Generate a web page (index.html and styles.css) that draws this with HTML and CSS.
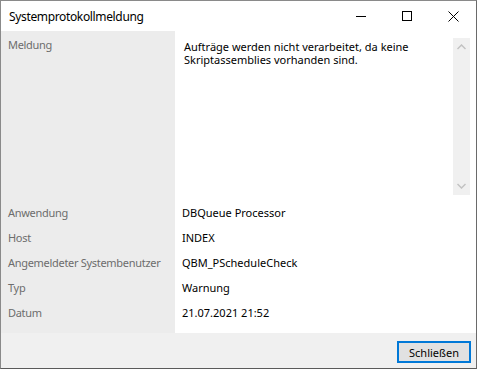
FILE: index.html
```html
<!DOCTYPE html>
<html lang="de">

<head>
  <meta charset="UTF-8" />
  <title>Systemprotokollmeldung</title>
  <link rel="stylesheet" href="styles.css">
</head>

<body>

  <div class="window">
    <!-- Title bar -->
    <div class="titlebar">
      <div class="title">Systemprotokollmeldung</div>
      <div class="caption-buttons">
        <span class="cap-btn">
          <svg width="10" height="10" viewBox="0 0 10 10"><path d="M0 5.5h10" stroke="#000" stroke-width="1" /></svg>
        </span>
        <span class="cap-btn">
          <svg width="10" height="10" viewBox="0 0 10 10"><rect x="0.5" y="0.5" width="9" height="9" fill="none" stroke="#000" stroke-width="1" /></svg>
        </span>
        <span class="cap-btn">
          <svg width="11" height="11" viewBox="0 0 11 11"><path d="M0.5 0.5l10 10M10.5 0.5l-10 10" stroke="#000" stroke-width="1" /></svg>
        </span>
      </div>
    </div>

    <!-- Details -->
    <div class="details">
      <div class="label message-label">Meldung</div>
      <div class="message-cell">
        <div class="message-text">Aufträge werden nicht verarbeitet, da keine Skriptassemblies vorhanden sind.</div>
        <div class="scrollbar">
          <svg width="9" height="6" viewBox="0 0 9 6"><path d="M0.5 5l4-4 4 4" fill="none" stroke="#c2c2c2" stroke-width="1.5" /></svg>
          <svg width="9" height="6" viewBox="0 0 9 6"><path d="M0.5 1l4 4 4-4" fill="none" stroke="#c2c2c2" stroke-width="1.5" /></svg>
        </div>
      </div>

      <div class="label">Anwendung</div>
      <div class="value">DBQueue Processor</div>

      <div class="label">Host</div>
      <div class="value">INDEX</div>

      <div class="label">Angemeldeter Systembenutzer</div>
      <div class="value">QBM_PScheduleCheck</div>

      <div class="label">Typ</div>
      <div class="value">Warnung</div>

      <div class="label">Datum</div>
      <div class="value">21.07.2021 21:52</div>

      <div class="label filler"></div>
      <div class="value filler"></div>
    </div>

    <!-- Buttons -->
    <div class="button-bar">
      <button class="btn-close">Schließen</button>
    </div>
  </div>

</body>

</html>
```

FILE: styles.css
```css
body {
  margin: 0;
  background-color: #ffffff;
  font-family: 'Noto Sans', 'Open Sans', sans-serif;
  font-size: 11px;
  color: #000000;
}

.window {
  width: 475px;
  height: 367px;
  border-top: 1px solid #8a8a8a;
  border-left: 1px solid #8a8a8a;
  border-right: 1px solid #6a6a6a;
  border-bottom: 1px solid #5a5a5a;
  background-color: #ffffff;
  display: flex;
  flex-direction: column;
}

.titlebar {
  height: 30px;
  display: flex;
  align-items: center;
  justify-content: space-between;
}

.title {
  font-size: 12px;
  letter-spacing: -0.35px;
  padding-left: 8px;
}

.caption-buttons {
  display: flex;
  height: 100%;
}

.cap-btn {
  width: 46px;
  display: flex;
  align-items: center;
  justify-content: center;
}

.details {
  flex: 1;
  display: grid;
  grid-template-columns: 174px 1fr;
  grid-template-rows: 169px repeat(5, 25px) 1fr;
}

.label {
  background-color: #ececec;
  color: #6d6d6d;
  letter-spacing: -0.3px;
  padding-left: 7px;
  display: flex;
  align-items: center;
}

.value {
  padding-left: 7px;
  display: flex;
  align-items: center;
}

.message-label {
  align-items: flex-start;
  padding-top: 6px;
}

.message-cell {
  display: flex;
  padding: 7px 6px 5px 9px;
}

.message-text {
  flex: 1;
  line-height: 13px;
  padding-top: 2px;
  padding-right: 20px;
}

.scrollbar {
  width: 17px;
  background-color: #f0f0f0;
  display: flex;
  flex-direction: column;
  justify-content: space-between;
  align-items: center;
  padding: 6px 0;
}

.button-bar {
  height: 35px;
  background-color: #f0f0f0;
  display: flex;
  justify-content: flex-end;
  align-items: flex-start;
  padding-right: 5px;
}

.btn-close {
  margin-top: 8px;
  width: 74px;
  height: 22px;
  background-color: #e1e1e1;
  border: 2px solid #0078d7;
  font-family: inherit;
  font-size: 11px;
  color: #000000;
  padding: 0;
}
```
